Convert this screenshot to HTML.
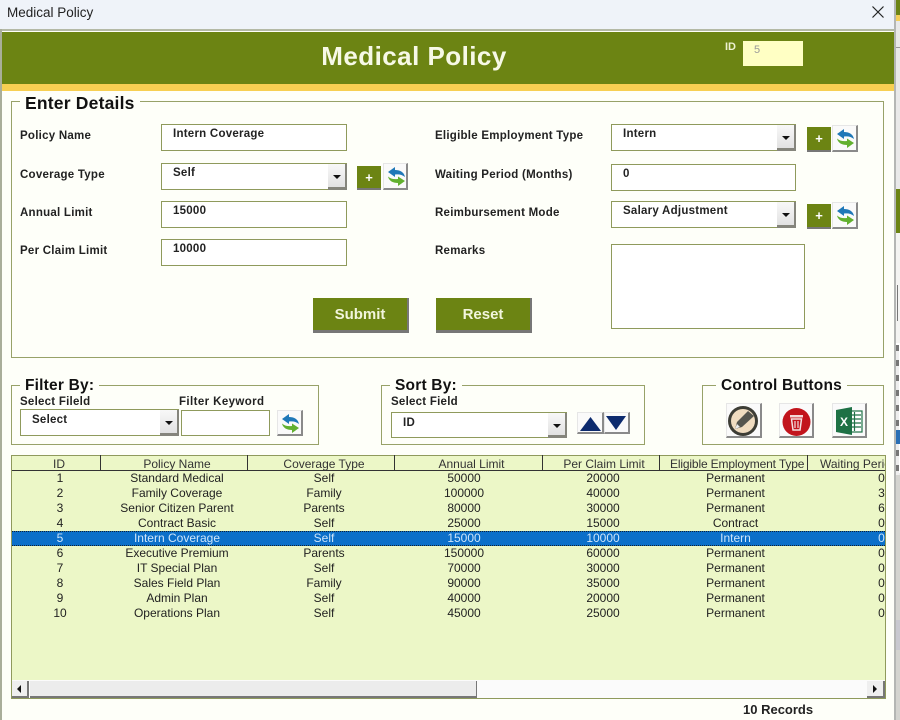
<!DOCTYPE html>
<html><head><meta charset="utf-8"><title>Medical Policy</title>
<style>
html,body{margin:0;padding:0}
body{width:900px;height:720px;overflow:hidden;position:relative;background:#fefff9;font-family:"Liberation Sans",sans-serif;color:#111}
.a,.l,.h,.in,.btn,.ib,.fs,.lg,.c,.hc{position:absolute}
.l{font-weight:bold;font-size:11.5px;letter-spacing:.25px;color:#222;white-space:nowrap;line-height:14px}
.in{background:#fff;border:1px solid #8f9a5c;box-sizing:border-box;font-weight:bold;font-size:11.5px;letter-spacing:.25px;color:#222;padding:2px 0 0 11px;line-height:14px}
.dd{position:absolute;right:-1px;top:0;bottom:-1px;width:19px;background:linear-gradient(#f8f8f8,#e2e2e2);border-right:2px solid #85857c;border-bottom:3px solid #85857c;box-sizing:border-box}
.dd:after{content:"";position:absolute;left:5px;top:11px;border:4px solid transparent;border-top:4px solid #111;border-bottom:0}
.fs{border:1px solid #98a269;box-sizing:border-box}
.lg{background:#fefff9;font-weight:bold;color:#111;padding:0 5px;white-space:nowrap;line-height:18px;font-size:15.5px;letter-spacing:.2px}
.btn{background:#6c8413;color:#f2f5dc;font-weight:bold;font-size:15px;text-align:center;box-sizing:border-box;border-right:2px solid #777;border-bottom:3px solid #777}
.ib{background:#fafafa;box-sizing:border-box;border-right:2px solid #8a8a8a;border-bottom:2px solid #8a8a8a;border-top:1px solid #e6e6e6;border-left:1px solid #e6e6e6}
.plus{background:#6c8413;color:#fff;font-weight:bold;font-size:13px;line-height:24px;text-align:center;border:0;border-bottom:2px solid #777}
.ib svg{position:absolute;left:0;top:0}
.hc,.c{font-size:12px;text-align:center;color:#222;white-space:nowrap;line-height:15px;overflow:hidden}
.hc{top:455px;height:15px;border-right:1px solid #333;box-sizing:border-box;line-height:17px;color:#333;padding-left:6px;padding-top:1px}
</style></head><body>

<svg width="0" height="0" style="position:absolute"><defs>
<g id="rf">
<path d="M4 8 L11 3 L11 6 C16 6 20 8 21 13 C18 10.500 15 10 11 10.500 L11 13Z" fill="#1f78b8"/>
<path d="M21 17 L14 22 L14 19 C9 19 5 17 4 12.500 C7 15 10 15.500 14 15 L14 12.500Z" fill="#62b02f"/>
</g>
</defs></svg>

<!-- background window strip -->
<div class="a" style="left:896px;top:0;width:4px;height:720px;background:#e9e9e9"></div>
<div class="a" style="left:896px;top:0;width:4px;height:15px;background:#6c8413"></div>
<div class="a" style="left:896px;top:15px;width:4px;height:6px;background:#f4cf58"></div>
<div class="a" style="left:896px;top:47px;width:4px;height:1px;background:#999"></div>
<div class="a" style="left:896px;top:189px;width:4px;height:44px;background:#6c8413"></div>
<div class="a" style="left:896px;top:233px;width:4px;height:110px;background:#f4f4f2"></div>
<div class="a" style="left:897px;top:285px;width:1px;height:36px;background:#777"></div>
<div class="a" style="left:896px;top:343px;width:4px;height:130px;background:#fff"></div>
<div class="a" style="left:896px;top:345px;width:3px;height:130px;background:repeating-linear-gradient(#777 0 6px,#eee 6px 15px)"></div>
<div class="a" style="left:896px;top:430px;width:4px;height:14px;background:#2a6fb5"></div>
<div class="a" style="left:896px;top:475px;width:4px;height:245px;background:#d4d4d0"></div>
<div class="a" style="left:896px;top:620px;width:4px;height:30px;background:#c8c8d0"></div>
<div class="a" style="left:894px;top:0;width:2px;height:720px;background:#b4b6b4"></div>

<!-- title bar -->
<div class="a" style="left:0;top:0;width:894px;height:29px;background:#eff3f9"></div>
<div class="a" style="left:7px;top:5px;font-size:13.500px;line-height:16px;color:#222">Medical Policy</div>
<svg class="a" style="left:871px;top:5px" width="14" height="14"><path d="M1.500 1.500 L12.500 12.500 M12.500 1.500 L1.500 12.500" stroke="#222" stroke-width="1.200" fill="none"/></svg>
<div class="a" style="left:0;top:29px;width:894px;height:2px;background:#b4b9a6"></div>
<div class="a" style="left:0;top:29px;width:2px;height:691px;background:#a9ae9a"></div>

<!-- header -->
<div class="a" style="left:2px;top:32px;width:892px;height:52px;background:#6c8413"></div>
<div class="a" style="left:2px;top:84px;width:892px;height:7px;background:#f7cf52"></div>
<div class="a" style="left:2px;top:40px;width:824px;text-align:center;font-weight:bold;font-size:26px;line-height:32px;color:#f7f9e6;letter-spacing:.45px">Medical Policy</div>
<div class="a" style="left:725px;top:41px;font-weight:bold;font-size:11px;line-height:13px;color:#eef2d2">ID</div>
<div class="a" style="left:743px;top:41px;width:60px;height:25px;background:#ffffc4;color:#999;font-size:11px;line-height:18px;padding-left:11px;box-sizing:border-box">5</div>

<!-- Enter Details -->
<div class="fs" style="left:11px;top:101px;width:873px;height:257px"></div>
<div class="lg" style="left:20px;top:94px;font-size:17.5px">Enter Details</div>

<div class="l" style="left:20px;top:129px">Policy Name</div>
<div class="l" style="left:20px;top:168px">Coverage Type</div>
<div class="l" style="left:20px;top:206px">Annual Limit</div>
<div class="l" style="left:20px;top:244px">Per Claim Limit</div>

<div class="in" style="left:161px;top:124px;width:186px;height:27px">Intern Coverage</div>
<div class="in" style="left:161px;top:163px;width:186px;height:27px">Self<div class="dd"></div></div>
<div class="in" style="left:161px;top:201px;width:186px;height:27px">15000</div>
<div class="in" style="left:161px;top:239px;width:186px;height:27px">10000</div>

<div class="ib plus" style="left:357px;top:166px;width:24px;height:24px">+</div>
<div class="ib" style="left:383px;top:163px;width:25px;height:27px"><svg width="24" height="25"><use href="#rf"/></svg></div>

<div class="l" style="left:435px;top:129px">Eligible Employment Type</div>
<div class="l" style="left:435px;top:168px">Waiting Period (Months)</div>
<div class="l" style="left:435px;top:206px">Reimbursement Mode</div>
<div class="l" style="left:435px;top:244px">Remarks</div>

<div class="in" style="left:611px;top:124px;width:185px;height:27px">Intern<div class="dd"></div></div>
<div class="in" style="left:611px;top:164px;width:185px;height:27px">0</div>
<div class="in" style="left:611px;top:201px;width:185px;height:27px">Salary Adjustment<div class="dd"></div></div>
<div class="in" style="left:611px;top:244px;width:194px;height:85px"></div>

<div class="ib plus" style="left:807px;top:127px;width:24px;height:25px">+</div>
<div class="ib" style="left:832px;top:125px;width:26px;height:27px"><svg width="24" height="25"><use href="#rf"/></svg></div>
<div class="ib plus" style="left:807px;top:204px;width:24px;height:25px">+</div>
<div class="ib" style="left:832px;top:202px;width:26px;height:27px"><svg width="24" height="25"><use href="#rf"/></svg></div>

<div class="btn" style="left:313px;top:298px;width:96px;height:35px;line-height:34px">Submit</div>
<div class="btn" style="left:436px;top:298px;width:96px;height:35px;line-height:34px">Reset</div>

<!-- Filter -->
<div class="fs" style="left:11px;top:385px;width:308px;height:60px"></div>
<div class="lg" style="left:20px;top:377px">Filter By:</div>
<div class="l" style="left:20px;top:395px">Select Fileld</div>
<div class="l" style="left:179px;top:395px;letter-spacing:.4px">Filter Keyword</div>
<div class="in" style="left:20px;top:409px;width:159px;height:27px;padding-top:3px">Select<div class="dd"></div></div>
<div class="in" style="left:181px;top:410px;width:89px;height:26px"></div>
<div class="ib" style="left:277px;top:410px;width:26px;height:26px"><svg width="24" height="24"><use href="#rf"/></svg></div>

<!-- Sort -->
<div class="fs" style="left:381px;top:385px;width:264px;height:60px"></div>
<div class="lg" style="left:390px;top:377px">Sort By:</div>
<div class="l" style="left:391px;top:395px">Select Field</div>
<div class="in" style="left:391px;top:412px;width:176px;height:26px;padding-top:3px">ID<div class="dd"></div></div>
<div class="ib" style="left:577px;top:412px;width:27px;height:22px"><svg width="25" height="20"><path d="M2 18 L12.500 4 L23 18Z" fill="#0c2a6e"/></svg></div>
<div class="ib" style="left:604px;top:412px;width:26px;height:22px"><svg width="24" height="20"><path d="M1 3 L21 3 L11 17Z" fill="#0c2a6e"/></svg></div>

<!-- Control -->
<div class="fs" style="left:702px;top:385px;width:182px;height:60px"></div>
<div class="lg" style="left:716px;top:377px">Control Buttons</div>
<div class="ib" style="left:726px;top:403px;width:36px;height:35px"><svg width="34" height="33">
<circle cx="16" cy="17" r="15" fill="#3d3d35"/><circle cx="16" cy="17" r="12" fill="#f0dcc0"/>
<path d="M8 25 L10 18 L21 7 L27 12 L15 23Z" fill="#55554e"/><path d="M10 20 L13 23 L8 25Z" fill="#eee"/></svg></div>
<div class="ib" style="left:779px;top:403px;width:35px;height:35px"><svg width="33" height="33">
<circle cx="16.500" cy="18" r="14" fill="#c2141c"/>
<path d="M10 11 H23 V13.500 H10Z" fill="#f4d8d8"/><path d="M11.500 15 H21.500 L20 26 H13Z" fill="none" stroke="#f4e0e0" stroke-width="1.500"/><path d="M15 17 V24 M18 17 V24" stroke="#f4e0e0" stroke-width="1.200"/></svg></div>
<div class="ib" style="left:832px;top:403px;width:35px;height:35px"><svg width="33" height="33">
<rect x="14" y="7" width="15" height="21" fill="#fff" stroke="#1e7145" stroke-width="1.200"/>
<path d="M18 11 H28 M18 15 H28 M18 19 H28 M18 23 H28 M21.500 8 V27" stroke="#1e7145" stroke-width="1.200"/>
<path d="M3 6 L19 3 V31 L3 28Z" fill="#1e7145"/>
<text x="7" y="22" font-family="Liberation Sans" font-size="12" font-weight="bold" fill="#fff">X</text></svg></div>

<!-- Grid -->
<div class="a" style="left:11px;top:455px;width:875px;height:243px;background:#ecf7c7;border:1px solid #8f9a5c;box-sizing:border-box;border-bottom:0"></div>
<div class="a" style="left:12px;top:470px;width:873px;height:1px;background:#333"></div>
<div class="hc" style="left:12px;width:89px">ID</div>
<div class="hc" style="left:101px;width:147px">Policy Name</div>
<div class="hc" style="left:248px;width:147px">Coverage Type</div>
<div class="hc" style="left:395px;width:148px">Annual Limit</div>
<div class="hc" style="left:543px;width:117px">Per Claim Limit</div>
<div class="hc" style="left:660px;width:148px;text-align:left;padding-left:10px;letter-spacing:-.15px">Eligible Employment Type</div>
<div class="hc" style="left:808px;width:77px;border:0;text-align:left;padding-left:12px">Waiting Period</div>

<div class="a" style="left:12px;top:531px;width:873px;height:15px;background:#0b6fc9;border-top:1px dotted #123;border-bottom:1px dotted #123;box-sizing:border-box"></div>

<div class="a" id="rows" style="left:0;top:1px">
<div class="c" style="left:12px;top:470px;width:96px">1</div><div class="c" style="left:101px;top:470px;width:152px">Standard Medical</div><div class="c" style="left:248px;top:470px;width:152px">Self</div><div class="c" style="left:395px;top:470px;width:138px">50000</div><div class="c" style="left:543px;top:470px;width:120px">20000</div><div class="c" style="left:660px;top:470px;width:151px">Permanent</div><div class="c" style="left:878px;top:470px;width:7px">0</div>
<div class="c" style="left:12px;top:485px;width:96px">2</div><div class="c" style="left:101px;top:485px;width:152px">Family Coverage</div><div class="c" style="left:248px;top:485px;width:152px">Family</div><div class="c" style="left:395px;top:485px;width:138px">100000</div><div class="c" style="left:543px;top:485px;width:120px">40000</div><div class="c" style="left:660px;top:485px;width:151px">Permanent</div><div class="c" style="left:878px;top:485px;width:7px">3</div>
<div class="c" style="left:12px;top:500px;width:96px">3</div><div class="c" style="left:101px;top:500px;width:152px">Senior Citizen Parent</div><div class="c" style="left:248px;top:500px;width:152px">Parents</div><div class="c" style="left:395px;top:500px;width:138px">80000</div><div class="c" style="left:543px;top:500px;width:120px">30000</div><div class="c" style="left:660px;top:500px;width:151px">Permanent</div><div class="c" style="left:878px;top:500px;width:7px">6</div>
<div class="c" style="left:12px;top:515px;width:96px">4</div><div class="c" style="left:101px;top:515px;width:152px">Contract Basic</div><div class="c" style="left:248px;top:515px;width:152px">Self</div><div class="c" style="left:395px;top:515px;width:138px">25000</div><div class="c" style="left:543px;top:515px;width:120px">15000</div><div class="c" style="left:660px;top:515px;width:151px">Contract</div><div class="c" style="left:878px;top:515px;width:7px">0</div>
<div class="c" style="left:12px;top:530px;width:96px;color:#cfe6fb">5</div><div class="c" style="left:101px;top:530px;width:152px;color:#cfe6fb">Intern Coverage</div><div class="c" style="left:248px;top:530px;width:152px;color:#cfe6fb">Self</div><div class="c" style="left:395px;top:530px;width:138px;color:#cfe6fb">15000</div><div class="c" style="left:543px;top:530px;width:120px;color:#cfe6fb">10000</div><div class="c" style="left:660px;top:530px;width:151px;color:#cfe6fb">Intern</div><div class="c" style="left:878px;top:530px;width:7px;color:#cfe6fb">0</div>
<div class="c" style="left:12px;top:545px;width:96px">6</div><div class="c" style="left:101px;top:545px;width:152px">Executive Premium</div><div class="c" style="left:248px;top:545px;width:152px">Parents</div><div class="c" style="left:395px;top:545px;width:138px">150000</div><div class="c" style="left:543px;top:545px;width:120px">60000</div><div class="c" style="left:660px;top:545px;width:151px">Permanent</div><div class="c" style="left:878px;top:545px;width:7px">0</div>
<div class="c" style="left:12px;top:560px;width:96px">7</div><div class="c" style="left:101px;top:560px;width:152px">IT Special Plan</div><div class="c" style="left:248px;top:560px;width:152px">Self</div><div class="c" style="left:395px;top:560px;width:138px">70000</div><div class="c" style="left:543px;top:560px;width:120px">30000</div><div class="c" style="left:660px;top:560px;width:151px">Permanent</div><div class="c" style="left:878px;top:560px;width:7px">0</div>
<div class="c" style="left:12px;top:575px;width:96px">8</div><div class="c" style="left:101px;top:575px;width:152px">Sales Field Plan</div><div class="c" style="left:248px;top:575px;width:152px">Family</div><div class="c" style="left:395px;top:575px;width:138px">90000</div><div class="c" style="left:543px;top:575px;width:120px">35000</div><div class="c" style="left:660px;top:575px;width:151px">Permanent</div><div class="c" style="left:878px;top:575px;width:7px">0</div>
<div class="c" style="left:12px;top:590px;width:96px">9</div><div class="c" style="left:101px;top:590px;width:152px">Admin Plan</div><div class="c" style="left:248px;top:590px;width:152px">Self</div><div class="c" style="left:395px;top:590px;width:138px">40000</div><div class="c" style="left:543px;top:590px;width:120px">20000</div><div class="c" style="left:660px;top:590px;width:151px">Permanent</div><div class="c" style="left:878px;top:590px;width:7px">0</div>
<div class="c" style="left:12px;top:605px;width:96px">10</div><div class="c" style="left:101px;top:605px;width:152px">Operations Plan</div><div class="c" style="left:248px;top:605px;width:152px">Self</div><div class="c" style="left:395px;top:605px;width:138px">45000</div><div class="c" style="left:543px;top:605px;width:120px">25000</div><div class="c" style="left:660px;top:605px;width:151px">Permanent</div><div class="c" style="left:878px;top:605px;width:7px">0</div>
</div>

<!-- scrollbar -->
<div class="a" style="left:11px;top:680px;width:875px;height:19px;background:#fbfbfb;border:1px solid #8f9a5c;border-top:0;box-sizing:border-box"></div>
<div class="a" style="left:12px;top:681px;width:17px;height:17px;background:#efefef;border-right:2px solid #777;border-bottom:2px solid #777;box-sizing:border-box"></div>
<div class="a" style="left:17px;top:685px;border:4px solid transparent;border-right:4px solid #111;border-left:0"></div>
<div class="a" style="left:30px;top:681px;width:447px;height:17px;background:#ececec;border-right:1px solid #777;border-bottom:2px solid #777;box-sizing:border-box"></div>
<div class="a" style="left:867px;top:681px;width:18px;height:17px;background:#efefef;border-right:2px solid #777;border-bottom:2px solid #777;box-sizing:border-box"></div>
<div class="a" style="left:873px;top:685px;border:4px solid transparent;border-left:4px solid #111;border-right:0"></div>

<div class="a" style="left:743px;top:702px;font-weight:bold;font-size:13px;line-height:15px;color:#222">10 Records</div>
</body></html>
